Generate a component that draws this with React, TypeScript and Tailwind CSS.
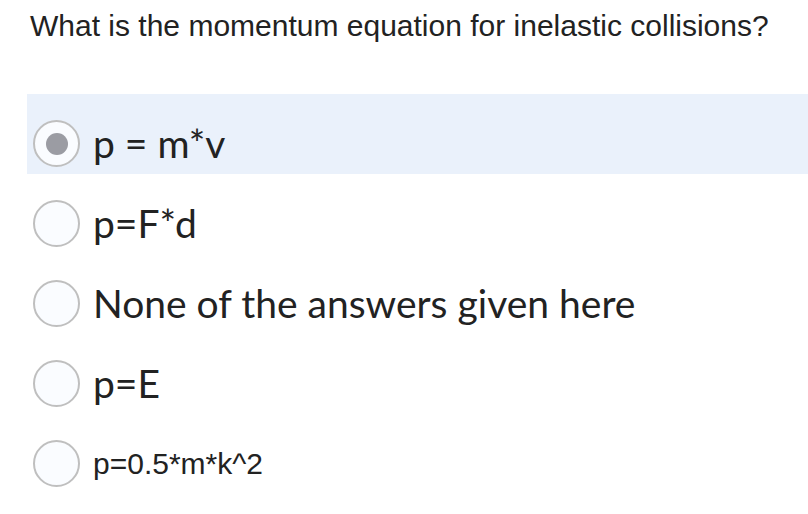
import React from "react";

const options = [
  { text: "p = m*v", selected: true, font: "lato" },
  { text: "p=F*d", selected: false, font: "lato" },
  { text: "None of the answers given here", selected: false, font: "lato" },
  { text: "p=E", selected: false, font: "lato" },
  { text: "p=0.5*m*k^2", selected: false, font: "helv" },
];

function Radio({ selected }: { selected: boolean }) {
  return (
    <div className="w-[47px] h-[47px] rounded-full border-2 border-[#bfbfbf] bg-[#fafcff] flex items-center justify-center shrink-0">
      {selected && <div className="w-[22px] h-[22px] rounded-full bg-[#9b9ca3]" />}
    </div>
  );
}

export default function App() {
  return (
    <div className="w-[808px] h-[514px] bg-white overflow-hidden text-[#222222]">
      <div
        className="pl-[30px] pt-[9px] h-[94px] text-[30px] leading-[34px] whitespace-nowrap"
        style={{ fontFamily: '"Liberation Sans", Arial, sans-serif' }}
      >
        What is the momentum equation for inelastic collisions?
      </div>
      <div className="ml-[27px]">
        {options.map((o, i) => (
          <div
            key={i}
            className={`h-[80px] pl-[6px] pt-[26px] ${o.selected ? "bg-[#eaf1fb]" : ""}`}
          >
            <div className="flex items-center h-[47px] gap-[13px]">
              <Radio selected={o.selected} />
              {o.font === "lato" ? (
                <span
                  className="text-[39px] leading-none whitespace-nowrap"
                  style={{ fontFamily: "Lato, sans-serif" }}
                >
                  {o.text}
                </span>
              ) : (
                <span
                  className="text-[30px] leading-none whitespace-nowrap"
                  style={{ fontFamily: '"Liberation Sans", Arial, sans-serif' }}
                >
                  {o.text}
                </span>
              )}
            </div>
          </div>
        ))}
      </div>
    </div>
  );
}
